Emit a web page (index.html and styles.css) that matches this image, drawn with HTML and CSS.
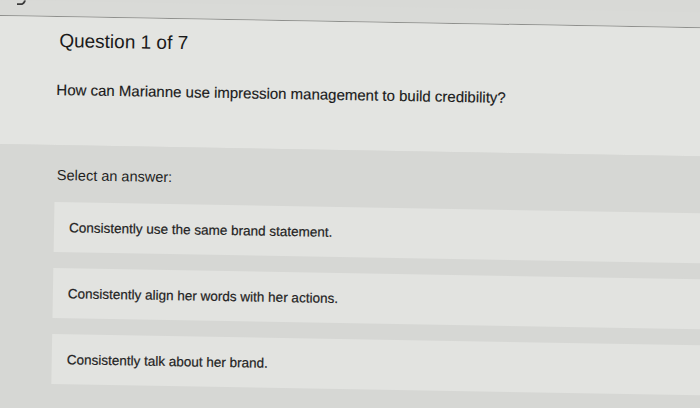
FILE: index.html
```html
<!DOCTYPE html>
<html lang="en">
<head>
<meta charset="utf-8">
<title>Question 1 of 7</title>
<link rel="stylesheet" href="styles.css">
</head>
<body>
<div class="page">
  <div class="topbar"><span class="corner-mark"></span></div>
  <section class="question">
    <h1 class="title">Question 1 of 7</h1>
    <p class="prompt">How can Marianne use impression management to build credibility?</p>
  </section>
  <section class="answers">
    <p class="label">Select an answer:</p>
    <div class="options">
      <div class="option">Consistently use the same brand statement.</div>
      <div class="option">Consistently align her words with her actions.</div>
      <div class="option">Consistently talk about her brand.</div>
    </div>
  </section>
</div>
</body>
</html>
```

FILE: styles.css
```css
html, body {
  margin: 0;
  padding: 0;
  width: 700px;
  height: 408px;
  overflow: hidden;
  background: #d8d9d6;
}

.page {
  width: 740px;
  height: 440px;
  transform: rotate(1deg);
  transform-origin: 0 0;
  font-family: "Liberation Sans", Arial, sans-serif;
  color: #1f1f1f;
  display: flex;
  flex-direction: column;
}

.topbar {
  height: 15px;
  background: #d9dad7;
  border-bottom: 1px solid #8e8f8c;
  overflow: hidden;
}

.corner-mark {
  display: block;
  width: 7px;
  height: 5px;
  margin: -2px 0 0 17px;
  border: 2px solid #3a3a3a;
  border-top: none;
  border-left: none;
  border-bottom-right-radius: 6px;
}

.question {
  background: #e3e4e1;
  height: 128px;
  padding: 13px 0 0 60px;
  box-sizing: border-box;
}

.title {
  margin: 0;
  font-size: 19px;
  line-height: 22px;
  font-weight: 400;
  color: #1a1a1a;
}

.prompt {
  margin: 29px 0 0 -2px;
  font-size: 15px;
  line-height: 18px;
  color: #1a1a1a;
  -webkit-text-stroke: 0.15px #1a1a1a;
}

.answers {
  flex: 1;
  background: #d6d7d4;
  padding: 21px 0 0 60px;
}

.label {
  margin: 0;
  font-size: 14.5px;
  line-height: 18px;
  color: #1f1f1f;
}

.options {
  display: flex;
  flex-direction: column;
  gap: 16px;
  margin: 18px 0 0 -2px;
}

.option {
  height: 50px;
  display: flex;
  align-items: center;
  padding-left: 15px;
  background: #e2e3e0;
  font-size: 13.5px;
  color: #222;
  -webkit-text-stroke: 0.2px #222;
}
```
